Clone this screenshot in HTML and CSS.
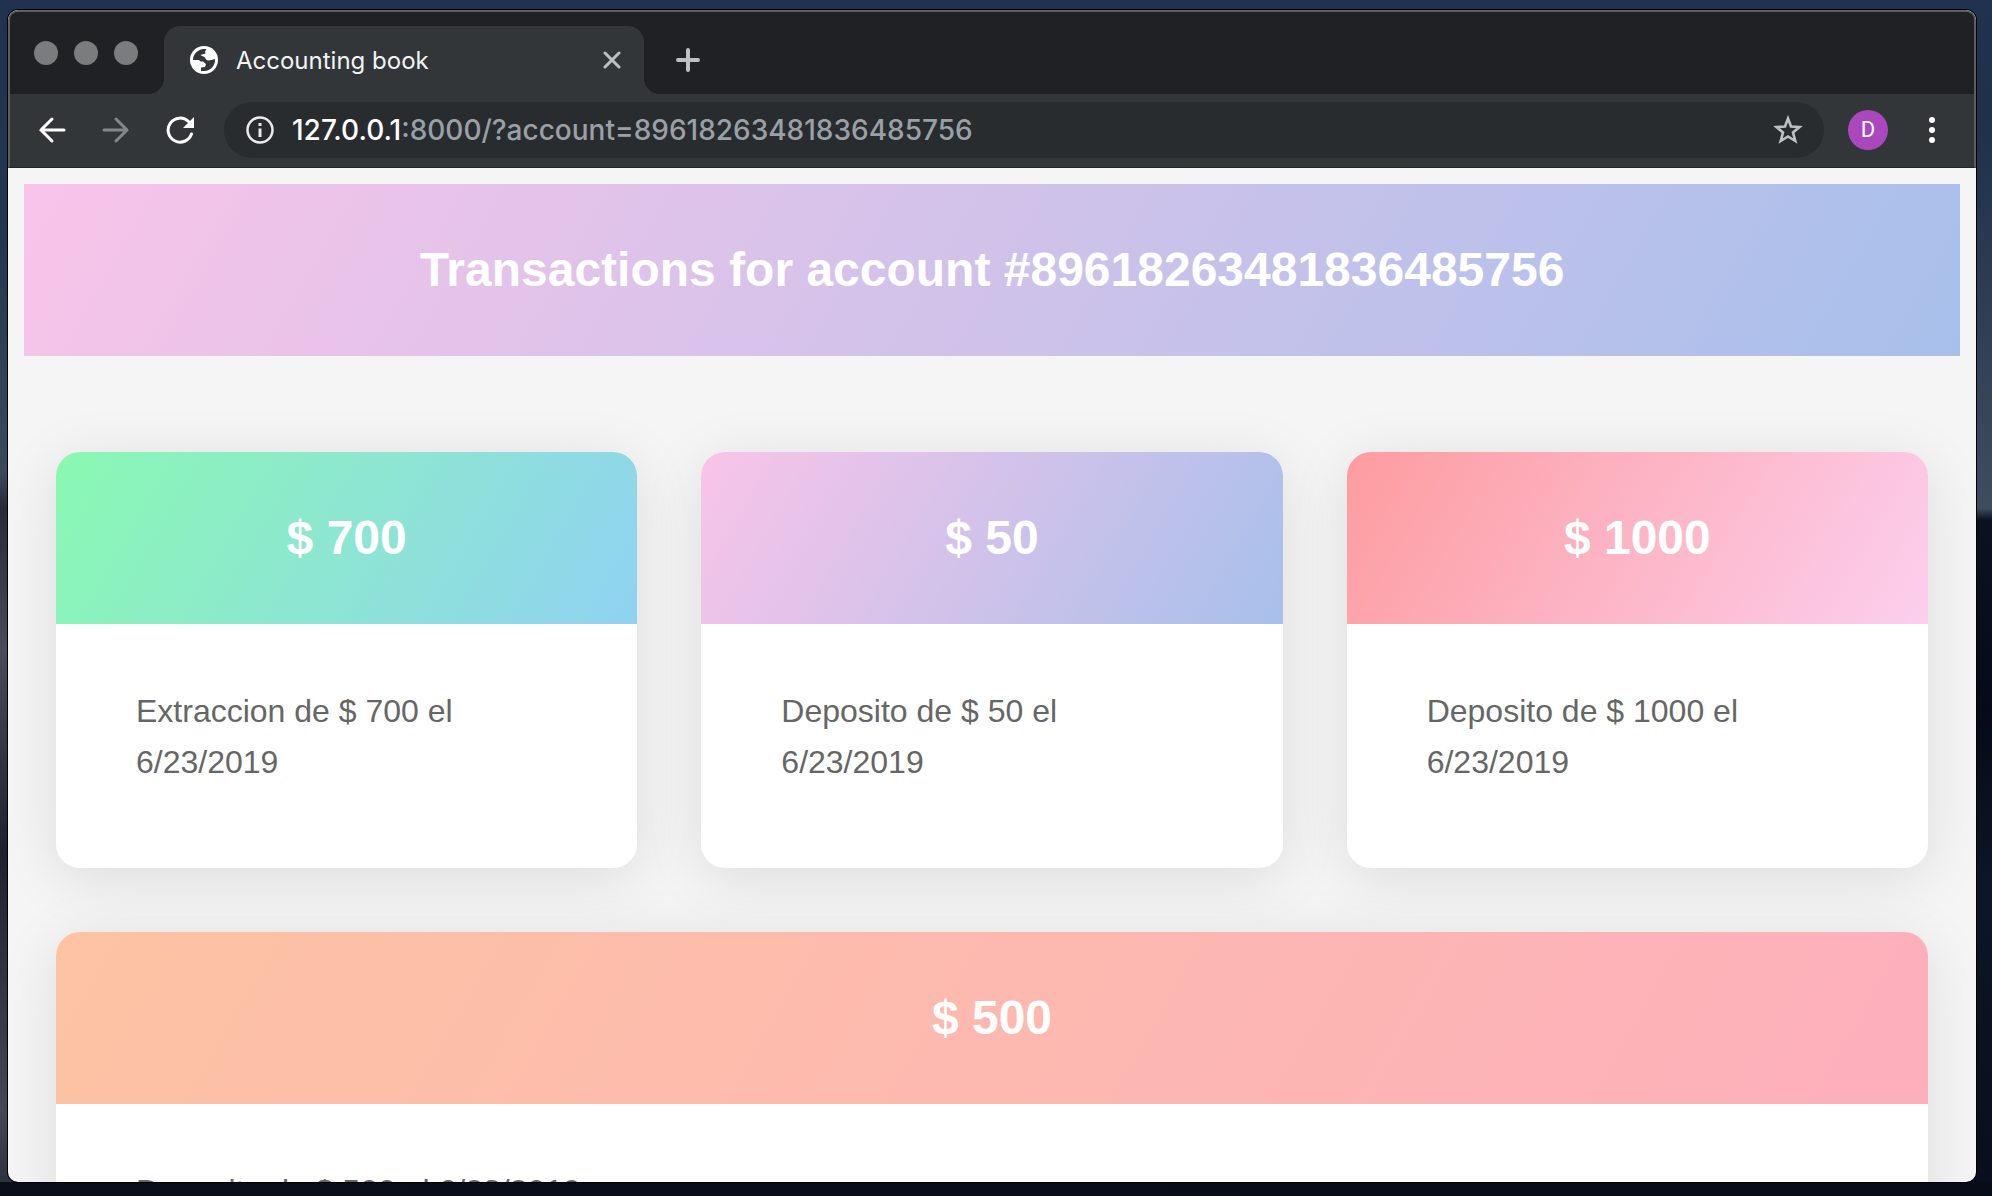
FILE: index.html
```html
<!DOCTYPE html>
<html lang="es">
<head>
<meta charset="utf-8">
<title>Accounting book</title>
<link rel="stylesheet" href="styles.css">
</head>
<body>
<div class="window">
  <header class="chrome">
    <div class="tab-strip">
      <div class="lights"><span class="light"></span><span class="light"></span><span class="light"></span></div>
      <div class="tab">
        <svg class="globe" viewBox="0 0 28 28" aria-hidden="true">
          <circle cx="14" cy="14" r="14" fill="#fff"/>
          <path d="M3 14C3 8 8 3 14 3h2.500L15 5.500l.5 2-5 1.500c1 1.500 3.500 1 4.500 2.500.5 1.500 1.500 3 3.500 3l3-.5 3.500-1C25.500 19 21 25 14 25h-3v-3.500l4-.5 1-3-3-2.500h-2.500L9 14Z" fill="#323639"/>
        </svg>
        <span class="tab-title">Accounting book</span>
        <button class="icon-button" aria-label="Close tab">
          <svg width="18" height="18" viewBox="0 0 18 18" stroke="#bdc1c6" stroke-width="3" stroke-linecap="round"><path d="M2 2 16 16M16 2 2 16"/></svg>
        </button>
      </div>
      <button class="icon-button new-tab" aria-label="New tab">
        <svg width="24" height="24" viewBox="0 0 24 24" stroke="#bdc1c6" stroke-width="4" stroke-linecap="round"><path d="M12 2V22M2 12H22"/></svg>
      </button>
    </div>
    <div class="toolbar">
      <nav class="nav-buttons" aria-label="History">
        <button class="icon-button" aria-label="Back">
          <svg width="28" height="28" viewBox="0 0 28 28" fill="none" stroke="#fff" stroke-width="3" stroke-linecap="round"><path d="M26 14H3M14 3 3 14 14 25"/></svg>
        </button>
        <button class="icon-button" aria-label="Forward" disabled>
          <svg width="28" height="28" viewBox="0 0 28 28" fill="none" stroke="#84878a" stroke-width="3" stroke-linecap="round"><path d="M2 14H25M14 3 25 14 14 25"/></svg>
        </button>
        <button class="icon-button" aria-label="Reload">
          <svg width="28" height="28" viewBox="0 0 28 28"><path d="M22.500 5.500A12 12 0 1 0 25.500 18" fill="none" stroke="#fff" stroke-width="3" stroke-linecap="round"/><path d="M28 1V12H17Z" fill="#fff"/></svg>
        </button>
      </nav>
      <div class="omnibox">
        <svg width="28" height="28" viewBox="0 0 28 28" aria-hidden="true"><circle cx="14" cy="14" r="12.500" fill="none" stroke="#e8eaed" stroke-width="2.500"/><path d="M12.500 7h3v3h-3zM12.500 12.500h3V21h-3z" fill="#e8eaed"/></svg>
        <a class="url" href="#"><span class="host">127.0.0.1</span>:8000/?account=89618263481836485756</a>
        <button class="icon-button" aria-label="Bookmark this page">
          <svg width="30" height="30" viewBox="0 0 30 30"><path d="M15 3.500 18 11.500 26.500 12 20 17.500 22.300 26 15 21.500 7.700 26 10 17.500 3.500 12 12 11.500Z" fill="none" stroke="#bdc1c6" stroke-width="2.600"/></svg>
        </button>
      </div>
      <button class="avatar" aria-label="Profile">D</button>
      <button class="icon-button menu" aria-label="Menu">
        <svg width="6" height="26" viewBox="0 0 6 26" fill="#fff"><circle cx="3" cy="3" r="3"/><circle cx="3" cy="13" r="3"/><circle cx="3" cy="23" r="3"/></svg>
      </button>
    </div>
  </header>
  <main class="page">
    <h1 class="banner lilac">Transactions for account #89618263481836485756</h1>
    <div class="cards">
      <article class="card"><h2 class="amount green">$ 700</h2><p class="detail">Extraccion de $ 700 el 6/23/2019</p></article>
      <article class="card"><h2 class="amount lilac">$ 50</h2><p class="detail">Deposito de $ 50 el 6/23/2019</p></article>
      <article class="card"><h2 class="amount rose">$ 1000</h2><p class="detail">Deposito de $ 1000 el 6/23/2019</p></article>
      <article class="card wide"><h2 class="amount peach">$ 500</h2><p class="detail">Deposito de $ 500 el 6/23/2019</p></article>
    </div>
  </main>
</div>
</body>
</html>
```
FILE: styles.css
```css
* { box-sizing: border-box; }

body {
  margin: 0;
  height: 100vh;
  padding: 10px 16px 14px 8px;
  overflow: hidden;
  background:
    linear-gradient(#20324f 0%, #20304a 10%, #3f4c5e 43%, #0a1222 44%, #060a18 60%, #0c1626 75%, #080e1c 100%) right / 50% 1182px no-repeat,
    linear-gradient(#20324f 0%, #22384f 20%, #3a4a5c 40%, #262a3a 43%, #474b5c 55%, #1c2232 72%, #434858 94%, #2c3240 100%) left / 50% 1182px no-repeat,
    linear-gradient(120deg, #262c3a 0, #2c303a 180px, #090e1a 210px, #080c18 100%);
  background-position: right top, left top, 0 0;
  background-size: 50% calc(100% - 14px), 50% calc(100% - 14px), auto;
  font-family: "Liberation Sans", Arial, sans-serif;
}

.window {
  position: relative;
  display: flex;
  flex-direction: column;
  height: 100%;
  overflow: hidden;
  border-radius: 10px;
  background: #f5f5f5;
  box-shadow: 0 0 0 1px #000;
}

.chrome {
  flex: none;
  border: 2px solid #5c5e61;
  border-bottom: 1px solid #232628;
  border-radius: 10px 10px 0 0;
  background: #323639;
  font-family: Inter, sans-serif;
}

.tab-strip {
  display: flex;
  height: 82px;
  padding-top: 14px;
  border-radius: 8px 8px 0 0;
  background: #202124;
}

.lights {
  display: flex;
  gap: 16px;
  width: 154px;
  padding: 15px 0 0 24px;
}

.light {
  width: 24px;
  height: 24px;
  border-radius: 50%;
  background: #7b7c7e;
}

.tab {
  position: relative;
  display: flex;
  align-items: center;
  width: 480px;
  padding: 0 14px 0 26px;
  border-radius: 16px 16px 0 0;
  background: #323639;
}

.tab::before,
.tab::after {
  content: "";
  position: absolute;
  bottom: 0;
  width: 16px;
  height: 16px;
}

.tab::before {
  right: 100%;
  background: radial-gradient(circle at 0 0, transparent 16px, #323639 16px);
}

.tab::after {
  left: 100%;
  background: radial-gradient(circle at 100% 0, transparent 16px, #323639 16px);
}

.globe {
  width: 28px;
  height: 28px;
}

.tab-title {
  flex: 1;
  padding-left: 18px;
  color: #f1f3f4;
  font-size: 24px;
}

.icon-button {
  display: grid;
  place-items: center;
  width: 36px;
  height: 36px;
  padding: 0;
  border: 0;
  background: none;
}

.new-tab {
  margin: 16px 0 0 26px;
}

.toolbar {
  display: flex;
  align-items: center;
  height: 73px;
  padding: 0 24px 2px;
}

.nav-buttons {
  display: flex;
  gap: 28px;
}

.omnibox {
  display: flex;
  flex: 1;
  align-items: center;
  height: 56px;
  margin-left: 26px;
  padding: 0 18px 0 22px;
  border-radius: 28px;
  background: #282c2f;
}

.url {
  flex: 1;
  padding-left: 18px;
  color: #9aa0a6;
  font-size: 28px;
  font-weight: 500;
  text-decoration: none;
}

.host { color: #fff; }

.avatar {
  width: 40px;
  height: 40px;
  margin: 0 26px 0 24px;
  padding: 0;
  border: 0;
  border-radius: 50%;
  background: #ab47bc;
  color: #fff;
  font: 22px Roboto, sans-serif;
}

.page {
  flex: 1;
  min-height: 0;
  padding: 16px;
}

.banner,
.amount {
  margin: 0;
  padding: 48px;
  color: #fff;
  font-size: 48px;
  line-height: 76px;
  text-align: center;
}

.cards {
  display: grid;
  grid-template-columns: repeat(3, 1fr);
  gap: 64px;
  padding: 96px 32px;
}

.card {
  border-radius: 24px;
  background: #fff;
  box-shadow: 0 10px 60px rgba(0, 0, 0, 0.1);
}

.wide { grid-column: 1 / -1; }

.amount { border-radius: 24px 24px 0 0; }

.detail {
  margin: 0;
  padding: 62px 80px 80px;
  color: #666;
  font-size: 32px;
  line-height: 51px;
}

.lilac { background: linear-gradient(120deg, #f9c4e9, #a7c0eb); }
.green { background: linear-gradient(120deg, #8af9b2, #90d2f2); }
.rose { background: linear-gradient(120deg, #fd9c9f, #fccfee); }
.peach { background: linear-gradient(120deg, #fdc3a3, #fdafbc); }
```
